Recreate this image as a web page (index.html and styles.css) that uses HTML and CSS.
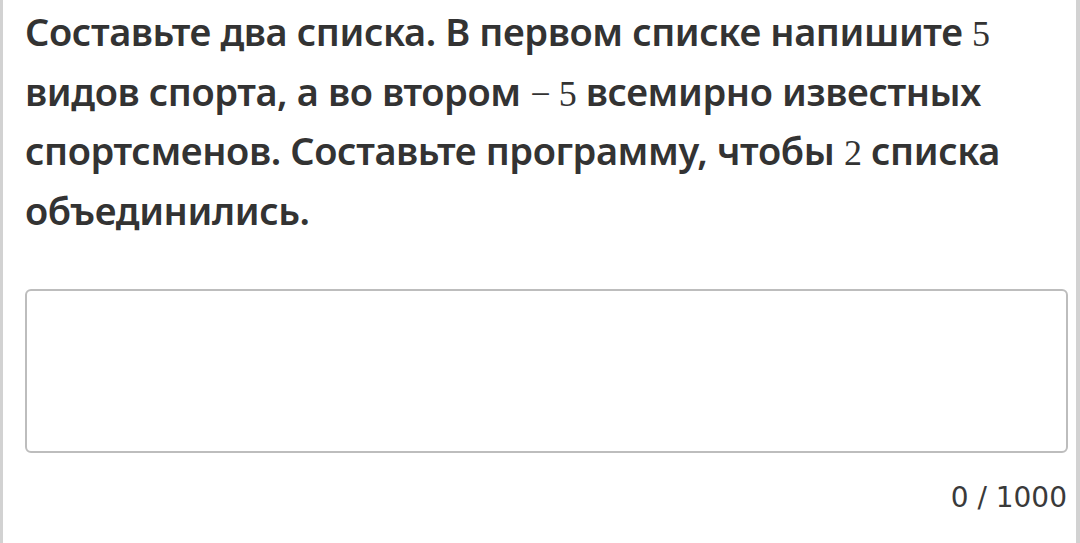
FILE: index.html
```html
<!DOCTYPE html>
<html lang="ru">
  <head>
    <meta charset="UTF-8" />
    <meta name="viewport" content="width=device-width, initial-scale=1.0" />
    <title>Задание</title>
    <link rel="stylesheet" href="styles.css">
  </head>
  <body>
    <!-- карточка задания -->
    <div class="task-card">
      <p class="task-text">
        Составьте два списка. В первом списке напишите <span class="num">5</span>
        видов спорта, а во втором <span class="num">− 5</span> всемирно известных
        спортсменов. Составьте программу, чтобы <span class="num">2</span> списка
        объединились.
      </p>
      <!-- поле ответа -->
      <textarea class="answer-box"></textarea>
      <div class="counter">0 / 1000</div>
    </div>
  </body>
</html>
```

FILE: styles.css
```css
html,
body {
  margin: 0;
  height: 100%;
  background-color: #ffffff;
}
.task-card {
  box-sizing: border-box;
  height: 543px;
  border-left: 3px solid #d2d2d2;
  border-right: 4px solid #d2d2d2;
  padding: 2px 8px 0 22px;
  display: flex;
  flex-direction: column;
}
.task-text {
  margin: 0;
  font-family: "Noto Sans", sans-serif;
  font-weight: 580;
  font-size: 38px;
  line-height: 59.5px;
  color: #333333;
  letter-spacing: -0.4px;
}
.num {
  font-family: "Liberation Serif", serif;
  font-weight: 400;
  font-size: 36px;
  line-height: 1;
}
.answer-box {
  box-sizing: border-box;
  width: 100%;
  height: 164px;
  margin: 49px 0 0 0;
  border: 2px solid #bdbdbd;
  border-radius: 6px;
  resize: none;
  outline: none;
}
.counter {
  margin-top: 29px;
  padding-right: 1px;
  text-align: right;
  font-family: "DejaVu Sans", sans-serif;
  font-size: 28px;
  line-height: 32px;
  color: #3a3a3a;
}
```
